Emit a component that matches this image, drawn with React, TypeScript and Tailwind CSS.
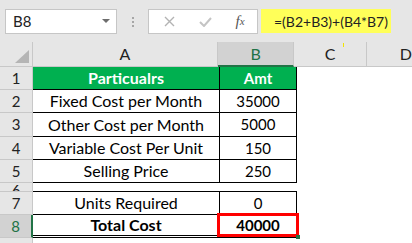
const font = { fontFamily: '"Lato", "Liberation Sans", sans-serif' };

type Row = {
  n: string;
  h: string;
  a?: string;
  b?: string;
  kind: "head" | "cell" | "gap" | "total" | "blank";
};

const rows: Row[] = [
  { n: "1", h: "h-[23px]", a: "Particualrs", b: "Amt", kind: "head" },
  { n: "2", h: "h-[23px]", a: "Fixed Cost per Month", b: "35000", kind: "cell" },
  { n: "3", h: "h-[24px]", a: "Other Cost per Month", b: "5000", kind: "cell" },
  { n: "4", h: "h-[23px]", a: "Variable Cost Per Unit", b: "150", kind: "cell" },
  { n: "5", h: "h-[23px]", a: "Selling Price", b: "250", kind: "cell" },
  { n: "6", h: "h-[9px]", kind: "gap" },
  { n: "7", h: "h-[23px]", a: "Units Required", b: "0", kind: "cell" },
  { n: "8", h: "h-[23px]", a: "Total Cost", b: "40000", kind: "total" },
  { n: "", h: "h-[20px]", kind: "blank" },
];

function FormulaBar() {
  return (
    <div className="flex h-[42px] items-start bg-[#e6e6e6] pt-[9px] pl-[5px]">
      <div className="flex h-[25px] w-[112px] items-center justify-between border border-[#c6c6c6] bg-white pl-[7px] pr-[6px] text-[15px] text-[#222]">
        <span>B8</span>
        <svg width="8" height="5" viewBox="0 0 8 5">
          <path d="M0 0h8L4 4z" fill="#6d6d6d" />
        </svg>
      </div>
      <div className="flex h-[25px] w-[31px] flex-col items-center justify-center gap-[2px]">
        <span className="h-[2px] w-[2px] bg-[#a6a6a6]" />
        <span className="h-[2px] w-[2px] bg-[#a6a6a6]" />
        <span className="h-[2px] w-[2px] bg-[#a6a6a6]" />
      </div>
      <div className="flex h-[25px] w-[110px] items-center border border-[#c6c6c6] bg-white">
        <div className="flex w-[36px] justify-center pl-[4px]">
          <svg width="11" height="11" viewBox="0 0 11 11">
            <path d="M1 1l9 9M10 1l-9 9" stroke="#b3b3b3" strokeWidth="1.4" />
          </svg>
        </div>
        <div className="flex w-[36px] justify-center pl-[4px]">
          <svg width="13" height="10" viewBox="0 0 13 10">
            <path d="M1 5l4 4 7-8" stroke="#c4c4c4" strokeWidth="2" fill="none" />
          </svg>
        </div>
        <div
          className="flex w-[36px] justify-center pl-[2px] text-[15px] italic text-[#555]"
          style={{ fontFamily: '"Liberation Serif", serif' }}
        >
          f<span className="mt-[3px] text-[11px]">x</span>
        </div>
      </div>
      <div className="ml-[3px] flex h-[24px] w-[130px] items-center whitespace-nowrap bg-[#ffff59] pl-[13px] text-[14px] text-[#222]">
        =(B2+B3)+(B4*B7)
      </div>
    </div>
  );
}

function HeaderRow() {
  return (
    <div className="flex h-[25px] text-[16px]">
      <div className="relative w-[33px] border-r border-b border-[#c8c8c8] bg-[#e6e6e6]">
        <svg className="absolute right-[3px] bottom-[3px]" width="14" height="13" viewBox="0 0 14 13">
          <path d="M14 0v13H0z" fill="#b5b5b5" />
        </svg>
      </div>
      <div className="flex w-[187px] items-center justify-center border-r border-b border-[#c8c8c8] bg-[#e6e6e6] text-[#222]">
        A
      </div>
      <div className="flex w-[77px] items-center justify-center border-r border-b-2 border-r-[#c8c8c8] border-b-[#217346] bg-[#d2d2d2] text-[#217346]">
        B
      </div>
      <div className="relative flex w-[73px] items-center justify-center border-r border-b border-[#c8c8c8] bg-[#e6e6e6] text-[#222]">
        C
        <span className="absolute left-[49px] top-[1px] h-[4px] w-[1px] bg-[#f2e400]" />
      </div>
      <div className="flex flex-1 items-center border-b border-[#c8c8c8] bg-[#e6e6e6] pl-[33px] text-[#222]">
        D
      </div>
    </div>
  );
}

function DataRow({ r }: { r: Row }) {
  const sel = r.kind === "total";
  const head = r.kind === "head";
  const table = r.kind !== "gap" && r.kind !== "blank";
  const bottom =
    r.kind === "total"
      ? "border-b-[3px] border-double border-black"
      : r.kind === "blank"
        ? ""
        : "border-b border-black";
  const text = head
    ? "bg-[#00b050] font-bold text-white text-[15px]"
    : sel
      ? "font-bold text-black text-[15px]"
      : "text-black";
  return (
    <div className={`flex ${r.h} leading-none`}>
      <div
        className={`flex w-[33px] justify-center overflow-hidden border-b border-[#c8c8c8] text-[15px] ${
          sel
            ? "border-r-2 border-r-[#217346] bg-[#d2d2d2] text-[#217346]"
            : "border-r border-r-[#c8c8c8] bg-[#e6e6e6] text-[#222]"
        } ${r.kind === "gap" ? "items-end" : "items-center"}`}
      >
        <span className={r.kind === "gap" ? "mb-[-7px]" : ""}>{r.n}</span>
      </div>
      <div
        className={`flex w-[187px] items-center justify-center whitespace-nowrap text-[16px] ${bottom} ${
          table ? "border-r border-r-black" : ""
        } ${text}`}
      >
        {r.a}
      </div>
      <div
        className={`relative flex w-[77px] items-center justify-center text-[15px] ${bottom} ${
          table ? "border-r border-r-black" : ""
        } ${text}`}
      >
        {r.b}
        {sel && (
          <>
            <span className="absolute left-[-3px] top-[-2px] right-[-3px] bottom-[-2px] border-[3px] border-[#ff0000]" />
            <span className="absolute right-[-4px] bottom-[-4px] h-[4px] w-[4px] bg-[#217346]" />
          </>
        )}
      </div>
      <div className="flex-1 bg-white" />
    </div>
  );
}

export default function App() {
  return (
    <div className="h-[243px] w-[412px] overflow-hidden bg-white" style={font}>
      <FormulaBar />
      <HeaderRow />
      {rows.map((r, i) => (
        <DataRow key={i} r={r} />
      ))}
    </div>
  );
}
